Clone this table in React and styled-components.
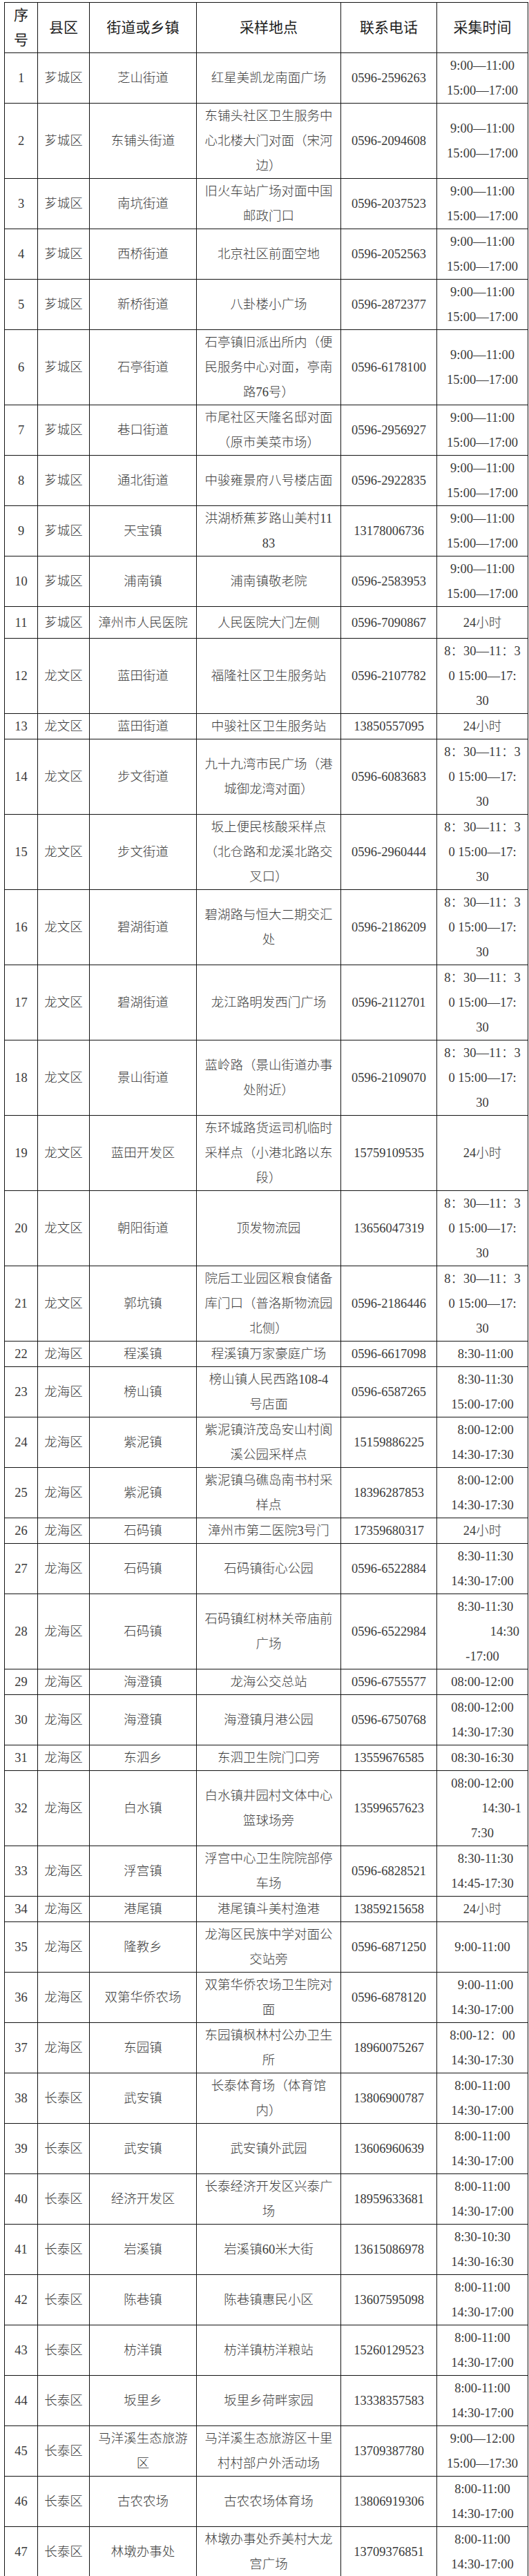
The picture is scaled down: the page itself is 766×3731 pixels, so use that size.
import React from "react";
import styled, { createGlobalStyle } from "styled-components";

const GlobalStyle = createGlobalStyle`
  html, body { margin: 0; padding: 0; background: #ffffff; }
  body { font-family: "Liberation Serif", "Noto Sans CJK SC", serif; }
`;

const Page = styled.div`
  padding: 3px 2px 0 6px;
`;

const Sheet = styled.table`
  border-collapse: collapse;
  table-layout: fixed;
  width: 758px;
`;

const Col = styled.col`
  width: ${(p) => p.$w}px;
`;

const HeadCell = styled.th`
  border: 1px solid #141414;
  padding: 0;
  font-weight: 400;
  font-size: 21px;
  line-height: 36px;
  color: #1e1e1e;
  text-align: center;
  vertical-align: middle;
  white-space: nowrap;
`;

const Cell = styled.td`
  border: 1px solid #141414;
  padding: 0;
  font-size: 18.5px;
  font-weight: 300;
  line-height: 36px;
  color: #3a3a3a;
  text-align: center;
  vertical-align: middle;
  white-space: pre;
  height: ${(p) => (p.$h ? `${p.$h}px` : "auto")};
`;

const Line = styled.span`
  display: block;
`;

const E = "\u2002";
const T1 = "9:00—11:00|15:00—17:00";
const T2 = "8：30—11：3|0 15:00—17:|30";
const T3 = "8:00-11:00|14:30-17:00";

const rows = [
  ["芗城区", "芝山街道", "红星美凯龙南面广场", "0596-2596263", T1],
  ["芗城区", "东铺头街道", "东铺头社区卫生服务中|心北楼大门对面（宋河|边）", "0596-2094608", T1],
  ["芗城区", "南坑街道", "旧火车站广场对面中国|邮政门口", "0596-2037523", T1],
  ["芗城区", "西桥街道", "北京社区前面空地", "0596-2052563", T1],
  ["芗城区", "新桥街道", "八卦楼小广场", "0596-2872377", T1],
  ["芗城区", "石亭街道", "石亭镇旧派出所内（便|民服务中心对面，亭南|路76号）", "0596-6178100", T1],
  ["芗城区", "巷口街道", "市尾社区天隆名邸对面|（原市美菜市场）", "0596-2956927", T1],
  ["芗城区", "通北街道", "中骏雍景府八号楼店面", "0596-2922835", T1],
  ["芗城区", "天宝镇", "洪湖桥蕉芗路山美村11|83", "13178006736", T1],
  ["芗城区", "浦南镇", "浦南镇敬老院", "0596-2583953", T1],
  ["芗城区", "漳州市人民医院", "人民医院大门左侧", "0596-7090867", "24小时", 45],
  ["龙文区", "蓝田街道", "福隆社区卫生服务站", "0596-2107782", T2],
  ["龙文区", "蓝田街道", "中骏社区卫生服务站", "13850557095", "24小时"],
  ["龙文区", "步文街道", "九十九湾市民广场（港|城御龙湾对面）", "0596-6083683", T2],
  ["龙文区", "步文街道", "坂上便民核酸采样点|（北仓路和龙溪北路交|叉口）", "0596-2960444", T2],
  ["龙文区", "碧湖街道", "碧湖路与恒大二期交汇|处", "0596-2186209", T2],
  ["龙文区", "碧湖街道", "龙江路明发西门广场", "0596-2112701", T2],
  ["龙文区", "景山街道", "蓝岭路（景山街道办事|处附近）", "0596-2109070", T2],
  ["龙文区", "蓝田开发区", "东环城路货运司机临时|采样点（小港北路以东|段）", "15759109535", "24小时"],
  ["龙文区", "朝阳街道", "顶发物流园", "13656047319", T2],
  ["龙文区", "郭坑镇", "院后工业园区粮食储备|库门口（普洛斯物流园|北侧）", "0596-2186446", T2],
  ["龙海区", "程溪镇", "程溪镇万家豪庭广场", "0596-6617098", E + "8:30-11:00"],
  ["龙海区", "榜山镇", "榜山镇人民西路108-4|号店面", "0596-6587265", E + "8:30-11:30|15:00-17:00"],
  ["龙海区", "紫泥镇", "紫泥镇浒茂岛安山村阆|溪公园采样点", "15159886225", E + "8:00-12:00|14:30-17:30"],
  ["龙海区", "紫泥镇", "紫泥镇乌礁岛南书村采|样点", "18396287853", E + "8:00-12:00|14:30-17:30"],
  ["龙海区", "石码镇", "漳州市第二医院3号门", "17359680317", "24小时"],
  ["龙海区", "石码镇", "石码镇街心公园", "0596-6522884", E + "8:30-11:30|14:30-17:00"],
  ["龙海区", "石码镇", "石码镇红树林关帝庙前|广场", "0596-6522984", E + "8:30-11:30|" + E.repeat(7) + "14:30|-17:00"],
  ["龙海区", "海澄镇", "龙海公交总站", "0596-6755577", "08:00-12:00"],
  ["龙海区", "海澄镇", "海澄镇月港公园", "0596-6750768", "08:00-12:00|14:30-17:30"],
  ["龙海区", "东泗乡", "东泗卫生院门口旁", "13559676585", "08:30-16:30"],
  ["龙海区", "白水镇", "白水镇井园村文体中心|篮球场旁", "13599657623", "08:00-12:00|" + E.repeat(6) + "14:30-1|7:30"],
  ["龙海区", "浮宫镇", "浮宫中心卫生院院部停|车场", "0596-6828521", E + "8:30-11:30|14:45-17:30"],
  ["龙海区", "港尾镇", "港尾镇斗美村渔港", "13859215658", "24小时"],
  ["龙海区", "隆教乡", "龙海区民族中学对面公|交站旁", "0596-6871250", "9:00-11:00"],
  ["龙海区", "双第华侨农场", "双第华侨农场卫生院对|面", "0596-6878120", E + "9:00-11:00|14:30-17:00"],
  ["龙海区", "东园镇", "东园镇枫林村公办卫生|所", "18960075267", "8:00-12：00|14:30-17:30"],
  ["长泰区", "武安镇", "长泰体育场（体育馆|内）", "13806900787", T3],
  ["长泰区", "武安镇", "武安镇外武园", "13606960639", T3],
  ["长泰区", "经济开发区", "长泰经济开发区兴泰广|场", "18959633681", T3],
  ["长泰区", "岩溪镇", "岩溪镇60米大街", "13615086978", "8:30-10:30|14:30-16:30"],
  ["长泰区", "陈巷镇", "陈巷镇惠民小区", "13607595098", T3],
  ["长泰区", "枋洋镇", "枋洋镇枋洋粮站", "15260129523", T3],
  ["长泰区", "坂里乡", "坂里乡荷畔家园", "13338357583", T3],
  ["长泰区", "马洋溪生态旅游|区", "马洋溪生态旅游区十里|村村部户外活动场", "13709387780", "9:00—12:00|15:00—17:30"],
  ["长泰区", "古农农场", "古农农场体育场", "13806919306", T3],
  ["长泰区", "林墩办事处", "林墩办事处乔美村大龙|宫广场", "13709376851", T3],
];

const widths = [48, 75, 155, 209, 139, 132];

function Lines({ text }) {
  const parts = text.split("|");
  return parts.map((t, i) => <Line key={i}>{t}</Line>);
}

export default function App() {
  return (
    <Page>
      <GlobalStyle />
      <Sheet>
        <colgroup>
          {widths.map((w, i) => (
            <Col key={i} $w={w} />
          ))}
        </colgroup>
        <thead>
          <tr>
            <HeadCell>
              <Line>序</Line>
              <Line>号</Line>
            </HeadCell>
            <HeadCell>县区</HeadCell>
            <HeadCell>街道或乡镇</HeadCell>
            <HeadCell>采样地点</HeadCell>
            <HeadCell>联系电话</HeadCell>
            <HeadCell>采集时间</HeadCell>
          </tr>
        </thead>
        <tbody>
          {rows.map(([d, s, loc, phone, time, h], i) => (
            <tr key={i}>
              <Cell $h={h}>{i + 1}</Cell>
              <Cell $h={h}>{d}</Cell>
              <Cell $h={h}>
                <Lines text={s} />
              </Cell>
              <Cell $h={h}>
                <Lines text={loc} />
              </Cell>
              <Cell $h={h}>{phone}</Cell>
              <Cell $h={h}>
                <Lines text={time} />
              </Cell>
            </tr>
          ))}
        </tbody>
      </Sheet>
    </Page>
  );
}
